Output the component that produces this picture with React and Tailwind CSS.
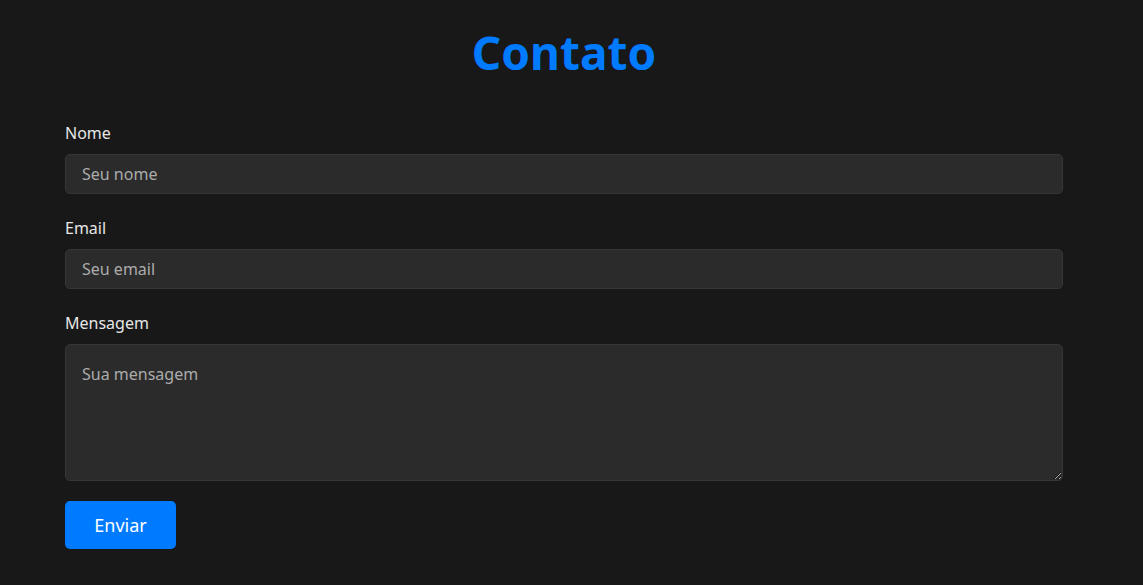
import React from "react";

const Field = ({ label, children }) => (
  <div className="mb-[22px]">
    <label className="block mb-[9px] text-base text-[#e6e6e6]">{label}</label>
    {children}
  </div>
);

const inputCls =
  "block w-full h-10 px-4 rounded-[5px] border border-[#363636] bg-[#2b2b2b] text-base text-[#e6e6e6] placeholder:text-[#ababab] outline-none";

export default function App() {
  return (
    <div
      className="min-h-[585px] bg-[#181818] pt-[24px]"
      style={{ fontFamily: '"Noto Sans", "Open Sans", sans-serif' }}
    >
      <div className="w-[1128px]">
        <div className="mx-auto w-[998px]">
          <h1 className="text-center text-[46px] leading-[56px] font-bold text-[#007bff] mb-[41px]">
            Contato
          </h1>

          <form onSubmit={(e) => e.preventDefault()}>
            <Field label="Nome">
              <input type="text" placeholder="Seu nome" className={inputCls} />
            </Field>
            <Field label="Email">
              <input type="email" placeholder="Seu email" className={inputCls} />
            </Field>
            <div className="mb-5">
              <label className="block mb-[9px] text-base text-[#e6e6e6]">Mensagem</label>
              <textarea
                placeholder="Sua mensagem"
                className="block w-full h-[137px] px-4 py-[17px] rounded-[5px] border border-[#363636] bg-[#2b2b2b] text-base text-[#e6e6e6] placeholder:text-[#ababab] outline-none"
              />
            </div>
            <button
              type="submit"
              className="h-12 w-[111px] rounded-[5px] bg-[#007bff] text-white text-[18px]"
            >
              Enviar
            </button>
          </form>
        </div>
      </div>
    </div>
  );
}
